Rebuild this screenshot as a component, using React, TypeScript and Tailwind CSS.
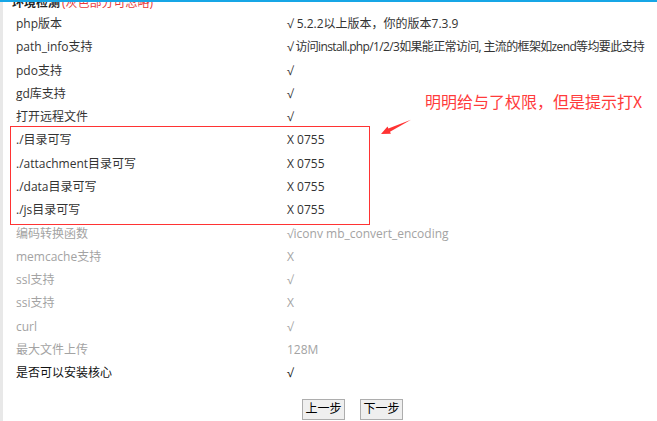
import React from "react";

type Row = { label: string; value: string; tone: "dark" | "gray" | "strong"; tight?: boolean };

const rows: Row[] = [
  { label: "php版本", value: "√ 5.2.2以上版本，你的版本7.3.9", tone: "dark" },
  { label: "path_info支持", value: "√ 访问install.php/1/2/3如果能正常访问, 主流的框架如zend等均要此支持", tone: "dark", tight: true },
  { label: "pdo支持", value: "√", tone: "dark" },
  { label: "gd库支持", value: "√", tone: "dark" },
  { label: "打开远程文件", value: "√", tone: "dark" },
  { label: "./目录可写", value: "X 0755", tone: "dark" },
  { label: "./attachment目录可写", value: "X 0755", tone: "dark" },
  { label: "./data目录可写", value: "X 0755", tone: "dark" },
  { label: "./js目录可写", value: "X 0755", tone: "dark" },
  { label: "编码转换函数", value: "√iconv mb_convert_encoding", tone: "gray" },
  { label: "memcache支持", value: "X", tone: "gray" },
  { label: "ssl支持", value: "√", tone: "gray" },
  { label: "ssi支持", value: "X", tone: "gray" },
  { label: "curl", value: "√", tone: "gray" },
  { label: "最大文件上传", value: "128M", tone: "gray" },
  { label: "是否可以安装核心", value: "√", tone: "strong" },
];

function toneClass(t: Row["tone"]) {
  if (t === "gray") return "text-[#a3a3a3]";
  if (t === "strong") return "text-[#111111]";
  return "text-[#333333]";
}

export default function App() {
  return (
    <div
      className="relative w-[657px] h-[421px] overflow-hidden bg-white text-[12px]"
      style={{ fontFamily: "'Open Sans', 'Noto Sans CJK SC', sans-serif" }}
    >
      <div className="h-[2px] bg-[#16a6e6]" />
      <div className="h-[419px] overflow-hidden border-l-[3px] border-[#e8e8e8]">
        <div className="mt-[-9.5px]">
          <div className="h-[20px] pl-[9px] flex items-center">
            <span className="font-bold text-[#222]">环境检测</span>
            <span className="text-[#e83a3a] ml-[2px]">(灰色部分可忽略)</span>
          </div>
          {rows.map((r) => (
            <div key={r.label} className={`h-[23.27px] flex items-center ${toneClass(r.tone)}`}>
              <div className="w-[284px] pl-[13px] shrink-0 whitespace-nowrap">{r.label}</div>
              <div className={r.tight ? "whitespace-nowrap tracking-[-0.65px]" : "whitespace-nowrap"}>
                {r.value}
              </div>
            </div>
          ))}
          <div className="mt-[14px] flex gap-[15px] pl-[299px]">
            <button className="w-[43px] h-[21px] border border-[#adadad] bg-[#efefef] text-[12px] text-black leading-none">
              上一步
            </button>
            <button className="w-[43px] h-[21px] border border-[#adadad] bg-[#efefef] text-[12px] text-black leading-none">
              下一步
            </button>
          </div>
        </div>
      </div>

      {/* annotations */}
      <div className="absolute left-[10px] top-[126px] w-[360px] h-[99px] border border-[#f33]" />
      <svg className="absolute left-0 top-0" width="657" height="421" viewBox="0 0 657 421">
        <polygon
          points="381,134 387.5,126.6 388.4,128.6 411,119.8 390,131.8 390.9,133.8"
          fill="#f33"
        />
      </svg>
      <div
        className="absolute left-[425px] top-[93px] text-[16px] leading-none text-[#ff3b3b] whitespace-nowrap"
        style={{ fontFamily: "'Noto Sans CJK SC', sans-serif" }}
      >
        明明给与了权限，但是提示打X
      </div>
    </div>
  );
}
